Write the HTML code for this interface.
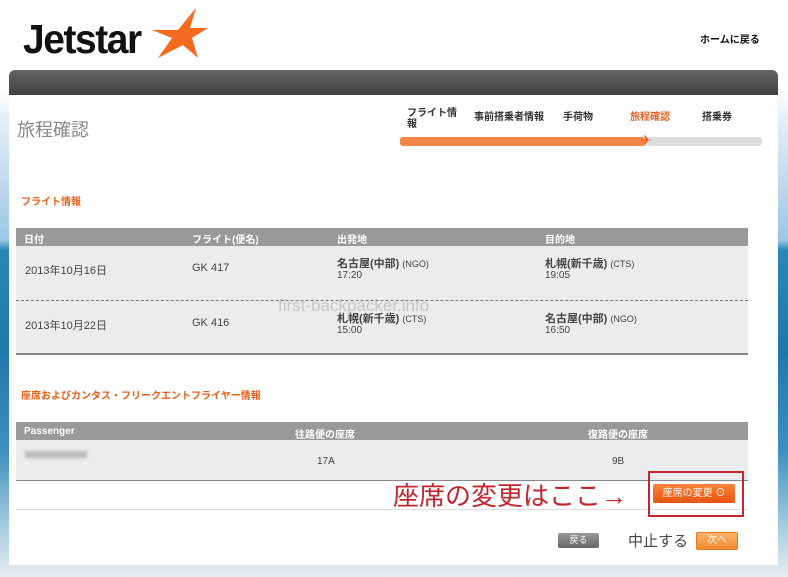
<!DOCTYPE html>
<html><head><meta charset="utf-8"><style>
*{margin:0;padding:0;box-sizing:border-box}
body{width:788px;height:577px;overflow:hidden;position:relative;font-family:"Liberation Sans","Noto Sans CJK JP",sans-serif;
background:linear-gradient(180deg,#fff 0,#fff 90px,#e4eef6 120px,#b5d3ea 200px,#9cc8e6 240px,#2b87b8 250px,#1f78ac 350px,#3c8fbf 450px,#9cc7dc 520px,#e8eef0 577px)}
.a{position:absolute}
.j{font-size:11px;color:#444}
.b{font-weight:bold}
.th{background:#999;color:#fff;font-size:10px;font-weight:bold}
</style></head><body>
<div class="a" style="left:23px;top:16px;font:bold 41px 'Liberation Sans',sans-serif;letter-spacing:-1.5px;color:#111;transform:scaleX(0.95);transform-origin:left">Jetstar</div>
<svg class="a" style="left:150px;top:8px" width="60" height="52" viewBox="0 0 60 52"><polygon points="46,0 40,20 58,20 42,30 48,50 33,37 8,50 22,30 2,22 28,22" fill="#f46a1f"/></svg>
<div class="a b" style="left:700px;top:31px;font-size:10px;color:#111">ホームに戻る</div>
<div class="a" style="left:9px;top:70px;width:769px;height:25px;border-radius:6px 6px 0 0;background:linear-gradient(#666,#3f3f3f)"></div>
<div class="a" style="left:9px;top:95px;width:769px;height:470px;background:#fff"></div>
<div class="a" style="left:17px;top:116px;font-size:18px;color:#888">旅程確認</div>
<div class="a b" style="left:407px;top:108px;font-size:10px;color:#333;line-height:11px;width:50px">フライト情<br>報</div>
<div class="a b" style="left:474px;top:108px;font-size:10px;color:#333">事前搭乗者情報</div>
<div class="a b" style="left:563px;top:108px;font-size:10px;color:#333">手荷物</div>
<div class="a b" style="left:630px;top:108px;font-size:10px;color:#e8601c">旅程確認</div>
<div class="a b" style="left:702px;top:108px;font-size:10px;color:#333">搭乗券</div>
<div class="a" style="left:400px;top:137px;width:362px;height:9px;background:#ddd;border-radius:3px"></div>
<div class="a" style="left:400px;top:137px;width:245px;height:9px;background:#f58646;border-radius:3px"></div>
<div class="a" style="left:640px;top:132px;font-size:14px;color:#e8601c">✈</div>
<div class="a b" style="left:21px;top:193px;font-size:10px;color:#e8601c">フライト情報</div>
<div class="a th" style="left:16px;top:228px;width:732px;height:18px"></div>
<div class="a th" style="left:24px;top:231px">日付</div>
<div class="a th" style="left:192px;top:231px">フライト(便名)</div>
<div class="a th" style="left:337px;top:231px">出発地</div>
<div class="a th" style="left:545px;top:231px">目的地</div>
<div class="a" style="left:16px;top:246px;width:732px;height:109px;background:#ececec;border-bottom:2px solid #888"></div>
<div class="a" style="left:16px;top:300px;width:732px;border-top:1px dashed #777"></div>
<div class="a j" style="left:25px;top:262px">2013年10月16日</div>
<div class="a j" style="left:192px;top:262px">GK 417</div>
<div class="a j" style="left:337px;top:255px"><b>名古屋(中部)</b> <span style="font-size:9px">(NGO)</span></div>
<div class="a j" style="left:337px;top:270px;font-size:10px">17:20</div>
<div class="a j" style="left:545px;top:255px"><b>札幌(新千歳)</b> <span style="font-size:9px">(CTS)</span></div>
<div class="a j" style="left:545px;top:270px;font-size:10px">19:05</div>
<div class="a j" style="left:25px;top:317px">2013年10月22日</div>
<div class="a j" style="left:192px;top:317px">GK 416</div>
<div class="a j" style="left:337px;top:310px"><b>札幌(新千歳)</b> <span style="font-size:9px">(CTS)</span></div>
<div class="a j" style="left:337px;top:325px;font-size:10px">15:00</div>
<div class="a j" style="left:545px;top:310px"><b>名古屋(中部)</b> <span style="font-size:9px">(NGO)</span></div>
<div class="a j" style="left:545px;top:325px;font-size:10px">16:50</div>
<div class="a" style="left:278px;top:296px;font-size:17px;color:rgba(150,150,150,.45)">first-backpacker.info</div>
<div class="a b" style="left:21px;top:387px;font-size:10px;color:#e8601c">座席およびカンタス・フリークエントフライヤー情報</div>
<div class="a th" style="left:16px;top:422px;width:732px;height:18px"></div>
<div class="a th" style="left:24px;top:426px">Passenger</div>
<div class="a th" style="left:295px;top:426px">往路便の座席</div>
<div class="a th" style="left:588px;top:426px">復路便の座席</div>
<div class="a" style="left:16px;top:440px;width:732px;height:41px;background:#ececec;border-bottom:1px solid #888"></div>
<div class="a" style="left:25px;top:451px;width:62px;height:7px;background:#bbb;filter:blur(1.5px)"></div>
<div class="a j" style="left:317px;top:456px;font-size:10px">17A</div>
<div class="a j" style="left:612px;top:456px;font-size:10px">9B</div>
<div class="a" style="left:16px;top:509px;width:732px;border-top:1px solid #ddd"></div>
<div class="a" style="left:393px;top:476px;font-size:26px;color:#c0262e;white-space:nowrap">座席の変更はここ→</div>
<div class="a" style="left:648px;top:471px;width:96px;height:46px;border:2px solid #c0262e"></div>
<div class="a" style="left:653px;top:484px;width:82px;height:19px;background:linear-gradient(#f9833b,#e85410);border-radius:2px;color:#fff;font-size:10px;line-height:19px;text-align:center">座席の変更 ⊙</div>
<div class="a" style="left:558px;top:533px;width:41px;height:15px;background:linear-gradient(#999,#666);border-radius:2px;color:#fff;font-size:9px;line-height:15px;text-align:center">戻る</div>
<div class="a" style="left:628px;top:530px;font-size:15px;color:#444">中止する</div>
<div class="a" style="left:696px;top:532px;width:42px;height:18px;background:linear-gradient(#fbb26a,#f08a30);border:1px solid #e07a20;border-radius:2px;color:#fff;font-size:10px;line-height:16px;text-align:center">次へ</div>
</body></html>
